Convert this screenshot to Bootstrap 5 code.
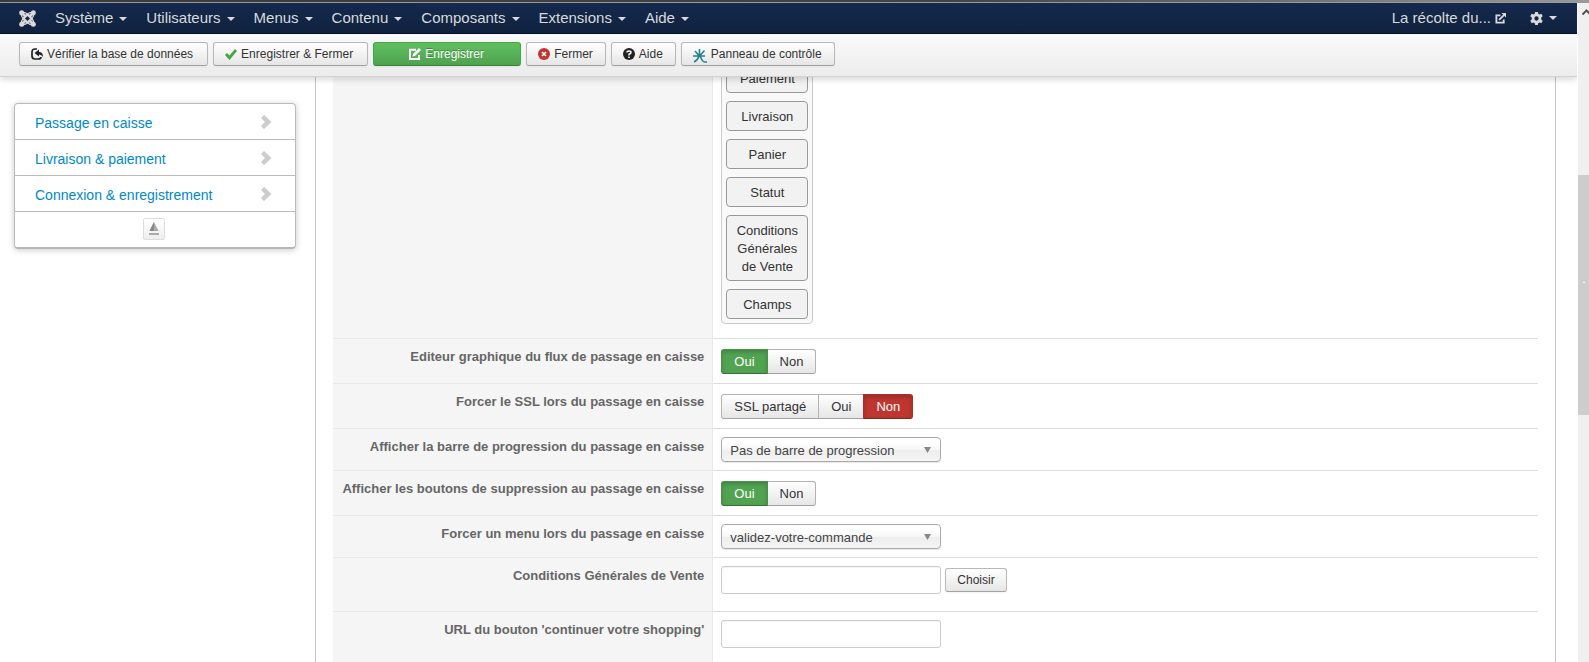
<!DOCTYPE html>
<html lang="fr">
<head>
<meta charset="utf-8">
<meta name="viewport" content="width=device-width, initial-scale=1">
<title>Configuration – Passage en caisse</title>
<link rel="stylesheet" href="https://cdn.jsdelivr.net/npm/bootstrap@5.3.0/dist/css/bootstrap.min.css">
<style>
body{font-family:"Liberation Sans",Arial,sans-serif;font-size:13px;line-height:18px;color:#333;background:#fff}
.window-edge{height:3px;background:linear-gradient(90deg,#3a3a3a 0,#444 60%,#999 100%);border-bottom:1px solid #999}
.topbar{height:31px;background:linear-gradient(#13294e,#10223e);background-color:#13294a;border-bottom:1px solid #060f2b;font-size:15px;padding:0 20px 0 19px}
.topbar a{color:#d9d9d9;text-decoration:none}
.topbar .nav-link{padding:0 8px 0 11px;line-height:30px}
.topbar .dropdown-toggle::after{border-top-width:4px;border-right-width:4px;border-left-width:4px;margin-left:6px;vertical-align:2px}
.toolstrip{height:43px;background:linear-gradient(#fafafa,#ececec);border-bottom:1px solid #d3d3d3;box-shadow:0 3px 6px rgba(0,0,0,.14);padding:8px 19px;gap:5px;z-index:2}
.btn-tool{--bs-btn-color:#333;--bs-btn-hover-color:#333;height:24px;padding:0 11px;font-size:12px;line-height:20px;border:1px solid #b8b8b8;border-bottom-color:#a2a2a2;border-radius:3px;background:linear-gradient(#fff,#e6e6e6);box-shadow:0 1px 2px rgba(0,0,0,.05);display:inline-flex;align-items:center;gap:4px;white-space:nowrap}
.toolstrip .btn-tool{padding:0 12px 0 11px}
.toolstrip .btn-wide{padding-right:14px}
.btn-save{--bs-btn-color:#fff;--bs-btn-hover-color:#fff;min-width:148px;justify-content:center;background:linear-gradient(#5fc05f,#4fa24f);border-color:#46a546 #46a546 #378137;text-shadow:0 -1px 0 rgba(0,0,0,.25)}
.side-col{width:20%;padding:26px 19px 0 14px}
.side-menu{border:1px solid #bbb;border-bottom:2px solid #b5b5b5;border-radius:4px;box-shadow:0 1px 6px rgba(0,0,0,.22);font-size:14px}
.side-menu a{display:flex;justify-content:space-between;height:36px;padding:2px 23px 0 20px;color:#08c;text-decoration:none;border-bottom:1px solid #bbb;align-items:center}
.side-menu a svg{margin-bottom:2px}
.side-foot{height:35px;padding:0 3px 2px 0}
.collapse-btn{width:22px;height:22px;padding:0;border:1px solid #ddd;border-radius:2px;background:linear-gradient(#fff,#eee);display:flex;align-items:center;justify-content:center}
.content-frame{border:solid #c6c6c6;border-width:0 1px;margin-right:21px;padding:0 17px;min-width:0}
/* the first row is partly scrolled under the toolbar */
.options{margin:-28px 0 0;table-layout:fixed;--bs-table-bg:transparent;--bs-table-color:#333}
.options>tbody>tr>*{padding:8px;border:0;border-top:1px solid #ddd;vertical-align:top}
.options>tbody>tr>th{width:31.5%;padding-top:9px;background:#f5f5f5;border-right:1px solid #e9e9e9;border-top-color:#e9e9e9;text-align:right;color:#666;font-weight:700}
.options>tbody>tr>td{height:45px}
.steps{width:92px;border:1px solid #ccc;border-radius:4px;background:#f9f9f9;padding:4px;gap:8px;margin-bottom:6px}
.btn-step{padding:6px 8px 4px;border:1px solid #999;border-radius:4px;background:#f2f2f2;font-size:13px;line-height:18px;--bs-btn-color:#333}
.switch-group{margin:2px 0 1px;vertical-align:top}
.switch-group .btn{--bs-btn-color:#333;--bs-btn-hover-color:#333;font-size:13px;line-height:23px;padding:0 12px;border:1px solid #b3b3b3;border-bottom-color:#a2a2a2;border-radius:3px;background:linear-gradient(#fff,#e6e6e6)}
.switch-group .btn-check:checked+.pick-yes{color:#fff;background:#51a351;border-color:#46924a #46924a #387038;box-shadow:inset 0 2px 4px rgba(0,0,0,.2)}
.switch-group .btn-check:checked+.pick-no{color:#fff;background:#bd362f;border-color:#a9302a #a9302a #802420;box-shadow:inset 0 2px 4px rgba(0,0,0,.2)}
.drop-field{width:220px;height:25px;padding:1px 24px 0 8px;font-size:13px;line-height:23px;color:#444;border:1px solid #aaa;border-radius:4px;background:url("data:image/svg+xml,%3Csvg xmlns='http://www.w3.org/2000/svg' width='7' height='6'%3E%3Cpath d='M0 0h7L3.500 6z' fill='%23888'/%3E%3C/svg%3E") right 9px center/7px 6px no-repeat,linear-gradient(#fff 20%,#f6f6f6 50%,#eee 52%,#f4f4f4);box-shadow:0 1px 1px rgba(0,0,0,.1)}
.text-field{width:220px;height:28px;padding:4px 6px;font-size:13px;border:1px solid #ccc;border-radius:3px;box-shadow:inset 0 1px 1px rgba(0,0,0,.05)}
.terms-row{padding-bottom:9px}
.scroll-track{width:12px;background:#f0f0f0;border-left:1px solid #fff}
.scroll-up{height:172px;padding:6px 0 0 4px;overflow:hidden}
.scroll-thumb{height:240px;background:#cdcdcd}
/* small light grip, a little above the middle of the thumb */
.scroll-thumb::before{content:"";width:2px;height:1px;margin-bottom:26px;background:#fff}
svg{display:block;flex:none}
</style>
</head>
<body class="vh-100 overflow-hidden d-flex flex-column">
<div class="window-edge flex-shrink-0"></div>
<div class="d-flex flex-grow-1 overflow-hidden">
 <div class="d-flex flex-column flex-grow-1 overflow-hidden">
  <nav class="topbar d-flex align-items-center flex-shrink-0" aria-label="Menu principal">
   <a href="#" aria-label="Joomla" class="me-2"><svg width="17" height="17" viewBox="0 0 17 17" fill="none" stroke="#d9d9d9" stroke-width="2.200"><path d="M8.500 4.500 12.500 8.500 8.500 12.500 4.500 8.500z"/><path d="M3 3 6.500 6.500M14 3 10.500 6.500M3 14 6.500 10.500M14 14 10.500 10.500" stroke-width="3"/><path d="M2.500 3Q1.500 6 4.500 8.500 1.500 11 2.500 14M14.500 3Q15.500 6 12.500 8.500 15.500 11 14.500 14M3 2.500Q6 1.500 8.500 4.500 11 1.500 14 2.500M3 14.500Q6 15.500 8.500 12.500 11 15.500 14 14.500" stroke-width="1.200"/><g fill="#d9d9d9" stroke="none"><circle cx="2.700" cy="2.700" r="2.500"/><circle cx="14.300" cy="2.700" r="2.500"/><circle cx="2.700" cy="14.300" r="2.500"/><circle cx="14.300" cy="14.300" r="2.500"/></g></svg></a>
   <div class="nav flex-nowrap me-auto">
    <a class="nav-link dropdown-toggle" href="#">Système</a><a class="nav-link dropdown-toggle" href="#">Utilisateurs</a><a class="nav-link dropdown-toggle" href="#">Menus</a><a class="nav-link dropdown-toggle" href="#">Contenu</a><a class="nav-link dropdown-toggle" href="#">Composants</a><a class="nav-link dropdown-toggle" href="#">Extensions</a><a class="nav-link dropdown-toggle" href="#">Aide</a>
   </div>
   <a href="#" class="d-flex align-items-center gap-1">La récolte du...<svg width="11" height="11" viewBox="0 0 12 12" fill="none" stroke="#d9d9d9" stroke-width="2"><path d="M6 2.500H1.500v8h8V7M4.500 7.500 10 2"/><path d="M7 0h5v5z" fill="#d9d9d9" stroke="none"/></svg></a>
   <a href="#" class="d-flex align-items-center dropdown-toggle ms-4" aria-label="Paramètres"><svg width="13" height="13" viewBox="0 0 14 14"><path fill="#d9d9d9" fill-rule="evenodd" d="M5.500 0h3l.4 2 1.300.7 2-.8 1.500 2.600-1.600 1.300v2.400l1.600 1.300-1.500 2.600-2-.8-1.300.7-.4 2h-3l-.4-2-1.300-.7-2 .8L.3 9.500l1.600-1.300V5.800L.3 4.500l1.500-2.600 2 .8L5.100 2zM7 4.700a2.300 2.300 0 1 0 0 4.600 2.300 2.300 0 0 0 0-4.600"/></svg></a>
  </nav>
  <div class="toolstrip d-flex flex-shrink-0 position-relative" role="toolbar">
   <button class="btn btn-tool btn-wide" type="button"><svg width="12" height="12" viewBox="0 0 12 12"><path d="M6 1H4Q1 1 1 4v4q0 3 3 3h3q3 0 3-2" fill="none" stroke="#222" stroke-width="1.700"/><path d="M3.500 5 8 1.500V4q4 0 4 5-1.500-2.500-4-2.500v2z" fill="#222"/></svg>Vérifier la base de données</button>
   <button class="btn btn-tool btn-wide" type="button"><svg width="12" height="11" viewBox="0 0 12 11"><path d="m0 6 2-2 2.500 2.500L10 0l2 2-7.500 9z" fill="#46a546"/></svg>Enregistrer &amp; Fermer</button>
   <button class="btn btn-tool btn-save" type="button"><svg width="12" height="12" viewBox="0 0 12 12"><path d="M7 1.800H1v9.200h9V7" fill="none" stroke="#fff" stroke-width="2"/><path d="M3.500 8.500 4 6l6-6 2 2-6 6z" fill="#fff"/></svg>Enregistrer</button>
   <button class="btn btn-tool" type="button"><svg width="12" height="12" viewBox="0 0 12 12"><circle cx="6" cy="6" r="6" fill="#bd362f"/><path d="m4 4 4 4m0-4L4 8" stroke="#fff" stroke-width="1.600"/></svg>Fermer</button>
   <button class="btn btn-tool" type="button"><svg width="12" height="12" viewBox="0 0 12 12"><circle cx="6" cy="6" r="6" fill="#222"/><path d="M4 4.500Q4 3 6 3t2 1.500Q8 5.500 6 6.300V7.500M6 8.500V10" fill="none" stroke="#fff" stroke-width="1.500"/></svg>Aide</button>
   <button class="btn btn-tool" type="button"><svg width="14" height="14" viewBox="0 0 14 14" class="mt-1" fill="none" stroke="#24808c" stroke-width="1.600"><path d="M6.500 0v7M2 2l4 4.500M11.500 1.500 7 6.500M0 7h12M6 7q-1 4-5 6M7 7l2 4q1 2 3 2h2"/></svg>Panneau de contrôle</button>
  </div>
  <main class="d-flex flex-grow-1 overflow-hidden">
   <aside class="side-col flex-shrink-0">
    <nav class="side-menu" aria-label="Sections">
     <a href="#">Passage en caisse<svg width="11" height="14" viewBox="0 0 11 14"><path d="m0 3 3-3 7.500 7L3 14l-3-3 4-4z" fill="#ccc"/></svg></a>
     <a href="#">Livraison &amp; paiement<svg width="11" height="14" viewBox="0 0 11 14"><path d="m0 3 3-3 7.500 7L3 14l-3-3 4-4z" fill="#ccc"/></svg></a>
     <a href="#">Connexion &amp; enregistrement<svg width="11" height="14" viewBox="0 0 11 14"><path d="m0 3 3-3 7.500 7L3 14l-3-3 4-4z" fill="#ccc"/></svg></a>
     <div class="side-foot d-flex justify-content-center align-items-center"><button class="collapse-btn" type="button" aria-label="Replier"><svg width="10" height="13" viewBox="0 0 10 13"><path d="M5 0 9.500 9h-9z" fill="#aaa"/><path d="M5 0v9H.5z" fill="#888"/><path d="M0 11h10v2H0z" fill="#aaa"/></svg></button></div>
    </nav>
   </aside>
   <section class="content-frame flex-grow-1">
    <table class="table options">
     <tbody>
      <tr><th scope="row"></th><td><div class="steps d-flex flex-column">
       <button class="btn btn-step" type="button">Paiement</button><button class="btn btn-step" type="button">Livraison</button><button class="btn btn-step" type="button">Panier</button><button class="btn btn-step" type="button">Statut</button><button class="btn btn-step" type="button">Conditions Générales de Vente</button><button class="btn btn-step" type="button">Champs</button></div></td></tr>
      <tr><th scope="row" id="l-edit">Editeur graphique du flux de passage en caisse</th><td><div class="btn-group switch-group" role="group" aria-labelledby="l-edit"><input class="btn-check" type="radio" name="edit" id="edit1" checked><label class="btn pick-yes" for="edit1">Oui</label><input class="btn-check" type="radio" name="edit" id="edit0"><label class="btn pick-no" for="edit0">Non</label></div></td></tr>
      <tr><th scope="row" id="l-ssl">Forcer le SSL lors du passage en caisse</th><td><div class="btn-group switch-group" role="group" aria-labelledby="l-ssl"><input class="btn-check" type="radio" name="ssl" id="ssl2"><label class="btn pick-yes" for="ssl2">SSL partagé</label><input class="btn-check" type="radio" name="ssl" id="ssl1"><label class="btn pick-yes" for="ssl1">Oui</label><input class="btn-check" type="radio" name="ssl" id="ssl0" checked><label class="btn pick-no" for="ssl0">Non</label></div></td></tr>
      <tr><th scope="row"><label for="bar">Afficher la barre de progression du passage en caisse</label></th><td class="h-auto"><select class="form-select drop-field" id="bar"><option>Pas de barre de progression</option></select></td></tr>
      <tr><th scope="row" id="l-del">Afficher les boutons de suppression au passage en caisse</th><td><div class="btn-group switch-group" role="group" aria-labelledby="l-del"><input class="btn-check" type="radio" name="del" id="del1" checked><label class="btn pick-yes" for="del1">Oui</label><input class="btn-check" type="radio" name="del" id="del0"><label class="btn pick-no" for="del0">Non</label></div></td></tr>
      <tr><th scope="row"><label for="menu">Forcer un menu lors du passage en caisse</label></th><td class="h-auto"><select class="form-select drop-field" id="menu"><option>validez-votre-commande</option></select></td></tr>
      <tr><th scope="row"><label for="terms">Conditions Générales de Vente</label></th><td><div class="terms-row d-flex align-items-center gap-1"><input class="form-control text-field" type="text" id="terms"><button class="btn btn-tool" type="button">Choisir</button></div></td></tr>
      <tr><th scope="row"><label for="shop">URL du bouton 'continuer votre shopping'</label></th><td><div class="pb-3"><input class="form-control text-field" type="text" id="shop"></div></td></tr>
     </tbody>
    </table>
   </section>
  </main>
 </div>
 <div class="scroll-track flex-shrink-0" aria-hidden="true"><div class="scroll-up"><svg width="9" height="7" viewBox="0 0 9 7"><path d="M.5 5.500 4.500 1.500l4 4" fill="none" stroke="#555" stroke-width="2"/></svg></div><div class="scroll-thumb d-flex align-items-center justify-content-center"></div></div>
</div>
<script src="https://cdn.jsdelivr.net/npm/bootstrap@5.3.0/dist/js/bootstrap.bundle.min.js"></script>
</body>
</html>
